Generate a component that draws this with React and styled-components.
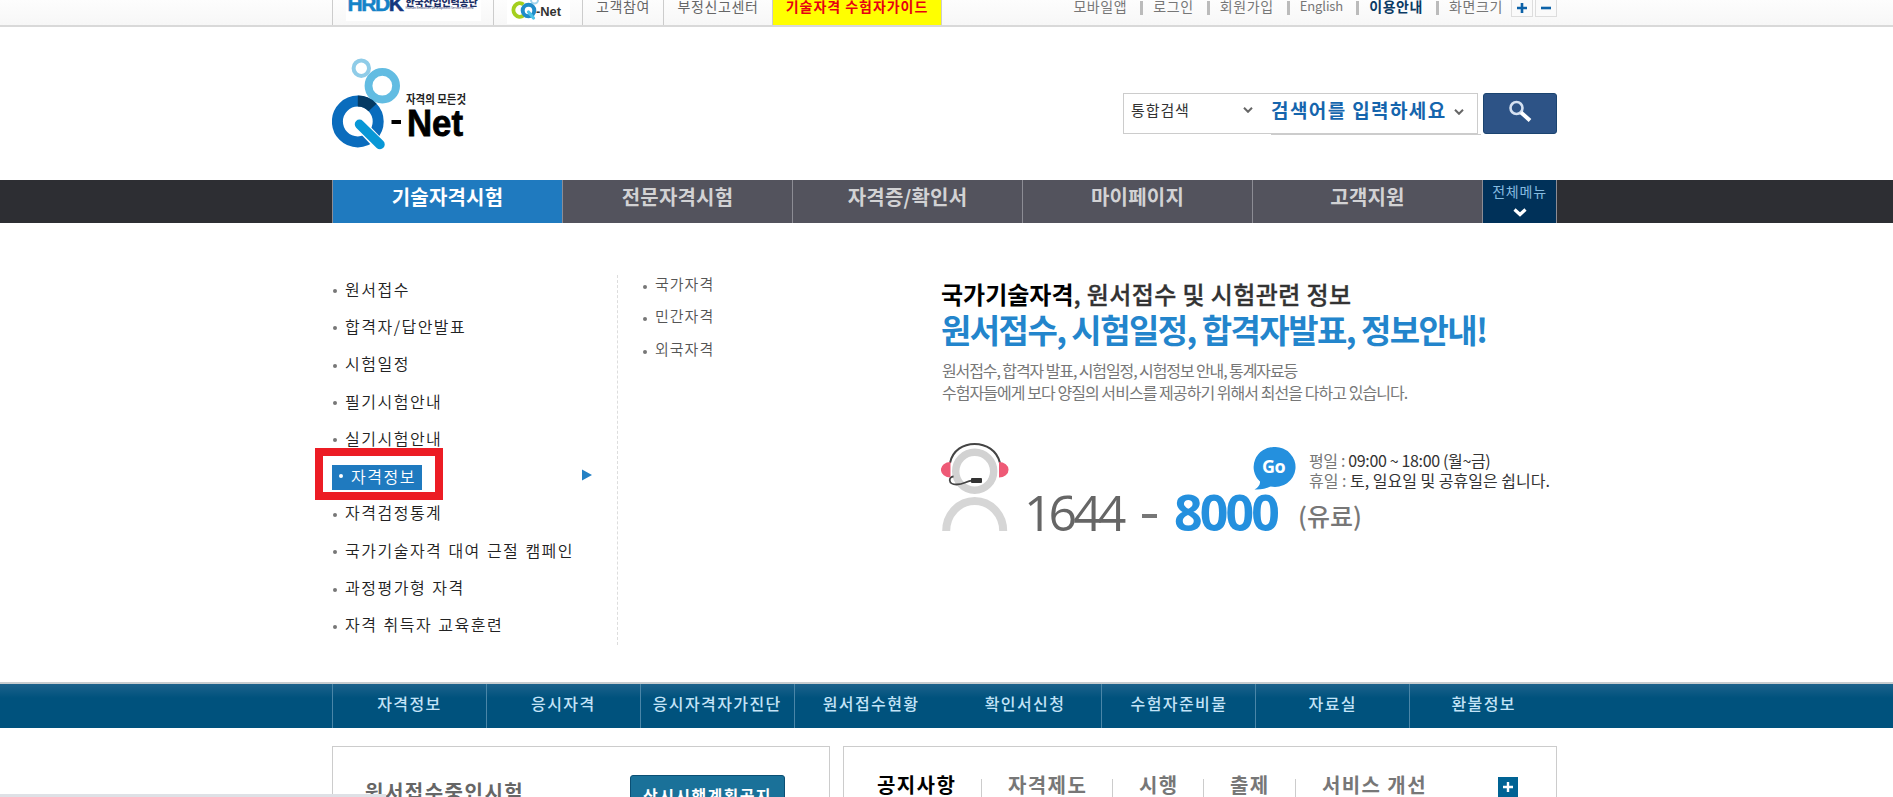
import styled, { createGlobalStyle } from 'styled-components';

const quickMenus = ['자격정보', '응시자격', '응시자격자가진단', '원서접수현황', '확인서신청', '수험자준비물', '자료실', '환불정보'];
const mainMenus = ['기술자격시험', '전문자격시험', '자격증/확인서', '마이페이지', '고객지원'];
const subMenus = [
    '원서접수',
    '합격자/답안발표',
    '시험일정',
    '필기시험안내',
    '실기시험안내',
    '자격정보',
    '자격검정통계',
    '국가기술자격 대여 근절 캠페인',
    '과정평가형 자격',
    '자격 취득자 교육훈련',
];
const depthMenus = ['국가자격', '민간자격', '외국자격'];
const noticeTabs = [
    { name: '공지사항', width: 104 },
    { name: '자격제도', width: 131 },
    { name: '시행', width: 91 },
    { name: '출제', width: 92 },
    { name: '서비스 개선', width: 160 },
];

function TopBar() {
    return (
        <TopBack>
            <TopInner>
                <LogoCell $width={161}>
                    <HrdkLogo>
                        <HrdkMark><b>HRD</b>K</HrdkMark>
                        <HrdkName>
                            한국산업인력공단
                            <small>Human Resources Development Service of Korea</small>
                        </HrdkName>
                    </HrdkLogo>
                </LogoCell>
                <LogoCell $width={89}>
                    <CqLogo>
                        <svg width="60" height="24" viewBox="0 0 60 24">
                            <circle cx="24.500" cy="0" r="3.500" fill="none" stroke="#9fd4ee" strokeWidth="2" />
                            <path d="M13.500 4.500A6.300 6.800 0 1 0 13.500 15.500" fill="none" stroke="#a4cf1f" strokeWidth="4" />
                            <circle cx="18.500" cy="10.500" r="5.800" fill="none" stroke="#1f8cc9" strokeWidth="4" />
                            <path d="M18.500 12l5 6" stroke="#4cc3e8" strokeWidth="3.200" strokeLinecap="round" />
                            <CqText x="26" y="15.500" textLength="25" lengthAdjust="spacingAndGlyphs">-Net</CqText>
                        </svg>
                    </CqLogo>
                </LogoCell>
                <TopCell $width={81}>고객참여</TopCell>
                <TopCell $width={109}>부정신고센터</TopCell>
                <GuideCell>기술자격 수험자가이드</GuideCell>
                <TopLinks>
                    <li>모바일앱</li>
                    <li>로그인</li>
                    <li>회원가입</li>
                    <li><span>English</span></li>
                    <li><strong>이용안내</strong></li>
                    <li>화면크기</li>
                </TopLinks>
                <SizeButton>
                    <svg width="10" height="10"><path d="M5 0v10M0 5h10" stroke="#0c62a8" strokeWidth="2.600" /></svg>
                </SizeButton>
                <SizeButton>
                    <svg width="10" height="10"><path d="M0 5h10" stroke="#0c62a8" strokeWidth="2.600" /></svg>
                </SizeButton>
            </TopInner>
        </TopBack>
    );
}

function QnetLogo() {
    return (
        <svg width="140" height="96" viewBox="0 0 140 96">
            <circle cx="29.300" cy="12.200" r="7.700" fill="none" stroke="#8fcce8" strokeWidth="4" />
            <circle cx="50.300" cy="29.700" r="13.800" fill="none" stroke="#62bce2" strokeWidth="7.800" />
            <circle cx="25.800" cy="65.500" r="20.400" fill="none" stroke="#0a6cbd" strokeWidth="11" />
            <path d="M25.800 45.100A20.400 20.400 0 0 1 40.500 51.500" fill="none" stroke="#053a63" strokeWidth="11" />
            <path d="M28 68.500L49.500 91" stroke="#fff" strokeWidth="12" />
            <path d="M27.500 68.300L48 88.500" stroke="#0897d6" strokeWidth="9.500" strokeLinecap="round" />
            <rect x="59.500" y="64" width="9.500" height="4" />
            <LogoSmall x="74" y="48" textLength="60" lengthAdjust="spacingAndGlyphs">자격의 모든것</LogoSmall>
            <LogoBig x="75" y="80" textLength="56" lengthAdjust="spacingAndGlyphs">Net</LogoBig>
        </svg>
    );
}

function Chevron() {
    return (
        <svg width="10" height="6" viewBox="0 0 10 6">
            <path d="M1 0.800l4 4 4-4" fill="none" stroke="#666" strokeWidth="2" />
        </svg>
    );
}

function Search() {
    return (
        <SearchRow>
            <SearchBox>
                <SearchType>통합검색<Chevron /></SearchType>
                <SearchInput>검색어를 입력하세요<Chevron /></SearchInput>
            </SearchBox>
            <SearchButton>
                <svg width="26" height="26" viewBox="0 0 26 26">
                    <circle cx="9.500" cy="9" r="6" fill="none" stroke="#d5e1f1" strokeWidth="2.600" />
                    <path d="M14 13.500l9 8" stroke="#fff" strokeWidth="4" />
                </svg>
            </SearchButton>
        </SearchRow>
    );
}

function CallCenter() {
    return (
        <svg width="70" height="89" viewBox="0 0 70 89">
            <circle cx="33.700" cy="29.300" r="19" fill="none" stroke="#d2d2d2" strokeWidth="7.400" />
            <path d="M5.200 89a28.500 30 0 0 1 57 0" fill="none" stroke="#d6d6d6" strokeWidth="8" />
            <path d="M9 21C14-4.500 53-4.500 59 21" fill="none" stroke="#444" strokeWidth="2" />
            <path d="M9.500 20a9.500 7.700 0 0 0 0 15.500zM58 20a9.500 7.700 0 0 1 0 15.500z" fill="#ee5a76" />
            <path d="M12.500 34.500c-5 0-6 8 3 8 8 0 9-3.500 16-4" fill="none" stroke="#444" strokeWidth="1.800" />
            <rect x="30" y="36" width="11" height="5" rx="1" fill="#333" />
        </svg>
    );
}

function Promo() {
    return (
        <PromoArea>
            <PromoTitle><b>국가기술자격</b>, 원서접수 및 시험관련 정보</PromoTitle>
            <PromoHead>원서접수, 시험일정, 합격자발표, 정보안내!</PromoHead>
            <PromoText $spacing="-1.1px">원서접수, 합격자 발표, 시험일정, 시험정보 안내, 통계자료등</PromoText>
            <PromoText $spacing="-0.95px">수험자들에게 보다 양질의 서비스를 제공하기 위해서 최선을 다하고 있습니다.</PromoText>
            <CallRow>
                <CallCenter />
                <PhoneFront>1644</PhoneFront>
                <PhoneDash />
                <PhoneBack>
                    8000
                    <GoBubble>
                        <svg width="44" height="44" viewBox="0 0 44 44">
                            <path d="M21.500 0a20.500 20 0 1 1-4 39.500q-7 3.500-16 3 6-3.500 5.500-8A20.500 20 0 0 1 21.500 0z" fill="#2490de" />
                        </svg>
                        <span>Go</span>
                    </GoBubble>
                </PhoneBack>
                <CallInfo>
                    <HourText $spacing="-0.35px"><i>평일 :</i> 09:00 ~ 18:00 (월~금)</HourText>
                    <HourText $spacing="0"><i>휴일 :</i> 토, 일요일 및 공휴일은 쉽니다.</HourText>
                    <Paid>(유료)</Paid>
                </CallInfo>
            </CallRow>
        </PromoArea>
    );
}

function App() {
    return (
        <Page>
            <GlobalStyle />
            <TopBar />
            <Header>
                <QnetLogo />
                <Search />
            </Header>
            <NavBack>
                <Nav>
                    {mainMenus.map((menu, i) => (
                        <NavItem key={menu} $on={i === 0}>{menu}</NavItem>
                    ))}
                    <AllMenu>
                        전체메뉴
                        <svg width="14" height="9" viewBox="0 0 14 9">
                            <path d="M1.500 1.500L7 6.500l5.500-5" fill="none" stroke="#fff" strokeWidth="3.200" />
                        </svg>
                    </AllMenu>
                </Nav>
            </NavBack>
            <SubArea>
                <SubList>
                    {subMenus.map((menu) => (
                        <SubItem key={menu}>
                            {menu === '자격정보' ? (
                                <>
                                    <SubOn>{menu}</SubOn>
                                    <RedFrame />
                                    <svg width="10" height="12"><path d="M0 0.500l10 5.500-10 5.500z" fill="#2381c5" /></svg>
                                </>
                            ) : menu}
                        </SubItem>
                    ))}
                </SubList>
                <DepthList>
                    {depthMenus.map((menu) => <DepthItem key={menu}>{menu}</DepthItem>)}
                </DepthList>
                <Promo />
            </SubArea>
            <QuickBack>
                <Quick>
                    {quickMenus.map((menu, i) => (
                        <QuickItem key={menu} $line={i !== 4}>{menu}</QuickItem>
                    ))}
                </Quick>
            </QuickBack>
            <Boards>
                <ExamCard>
                    <ExamTitle>원서접수중인시험</ExamTitle>
                    <ExamButton>상시시행계획공지</ExamButton>
                </ExamCard>
                <NoticeCard>
                    {noticeTabs.map((tab, i) => (
                        <NoticeTab key={tab.name} $on={i === 0} $width={tab.width}>{tab.name}</NoticeTab>
                    ))}
                    <MoreButton>
                        <svg width="10" height="10"><path d="M5 0v10M0 5h10" stroke="#fff" strokeWidth="2.400" /></svg>
                    </MoreButton>
                </NoticeCard>
            </Boards>
            <StatusBar />
        </Page>
    );
}

export default App;

const GlobalStyle = createGlobalStyle`
    * {
        box-sizing : border-box;
    }
    body {
        margin : 0;
        overflow : hidden;
        background : #fff;
        font-family : 'Noto Sans CJK KR', sans-serif;
    }
    ul {
        margin : 0;
        padding : 0;
        list-style : none;
    }
`;

const Page = styled.div`
    position : relative;
    height : 797px;
    overflow : hidden;
`;

const TopBack = styled.div`
    height : 27px;
    background : linear-gradient(#fdfdfd, #f7f7f7);
    border-bottom : 2px solid #d9d9d9;
`;

const TopInner = styled.div`
    display : flex;
    width : 1225px;
    height : 25px;
    margin-left : 332px;
`;

const TopCell = styled.div`
    width : ${(props) => props.$width}px;
    height : 25px;
    border-left : 1px solid #ccc;
    color : #666;
    font-size : 14px;
    letter-spacing : 0.6px;
    line-height : 12px;
    text-align : center;
    white-space : nowrap;
`;

const LogoCell = styled(TopCell)`
    display : flex;
    justify-content : center;
`;

const GuideCell = styled(TopCell)`
    width : 170px;
    border-right : 1px solid #ccc;
    background : #ffff00;
    color : #e60012;
    font-weight : 700;
    letter-spacing : 0.95px;
`;

const HrdkLogo = styled.div`
    display : flex;
    gap : 3px;
    width : 135px;
    height : 21px;
    padding-left : 2px;
    background : #fff;
`;

const HrdkMark = styled.div`
    height : 12px;
    color : #14387f;
    font-family : 'Liberation Sans', sans-serif;
    font-size : 21px;
    font-weight : 700;
    line-height : 8px;
    letter-spacing : -1.4px;
    -webkit-text-stroke : 0.5px;

    b {
        color : #1583c8;
    }
`;

const HrdkName = styled.div`
    color : #1d2f66;
    font-size : 10px;
    font-weight : 900;
    letter-spacing : -0.2px;
    line-height : 3px;
    text-align : left;

    small {
        display : block;
        margin-top : 4px;
        font-size : 3px;
        letter-spacing : 0;
        font-weight : 400;
    }
`;

const CqLogo = styled.div`
    width : 63px;
    height : 24px;
    padding-left : 3px;
    background : #fff;
`;

const CqText = styled.text`
    font-family : 'Liberation Sans', sans-serif;
    font-size : 13px;
    font-weight : 700;
    letter-spacing : 0;
    fill : #333;
`;

const TopLinks = styled.ul`
    display : flex;
    margin-left : auto;
    padding-right : 8px;
    color : #777;
    font-size : 14px;
    line-height : 12px;
    letter-spacing : 0.6px;

    li {
        display : flex;
        white-space : nowrap;
    }
    li + li::before {
        content : '';
        width : 3px;
        height : 14px;
        margin : 1px 10px 0 13px;
        background : #bbb;
    }
    span {
        font-size : 13px;
        letter-spacing : -0.1px;
    }
    strong {
        color : #0b3a63;
    }
`;

const SizeButton = styled.span`
    display : flex;
    justify-content : center;
    align-items : center;
    width : 22px;
    height : 17px;
    margin-right : 2px;
    border : 1px solid #ddd;
    border-top : 0;
    background : #fafafa;

    &:last-child {
        margin-right : 0;
    }
`;

const Header = styled.div`
    display : flex;
    justify-content : space-between;
    width : 1225px;
    height : 153px;
    margin-left : 332px;
    padding-top : 29px;
`;

const LogoSmall = styled.text`
    font-size : 12px;
    font-weight : 700;
    fill : #222;
`;

const LogoBig = styled.text`
    font-family : 'Liberation Sans', sans-serif;
    font-size : 37px;
    font-weight : 700;
    fill : #000;
    stroke : #000;
    stroke-width : 0.8px;
`;

const SearchRow = styled.div`
    display : flex;
    gap : 5px;
    margin-top : 37px;
`;

const SearchBox = styled.div`
    display : flex;
    width : 355px;
    height : 41px;
    border : 1px solid #ccc;
`;

const SearchType = styled.div`
    display : flex;
    flex-shrink : 0;
    align-items : center;
    justify-content : space-between;
    width : 129px;
    height : 31px;
    padding-left : 7px;
    color : #333;
    font-size : 15px;
    letter-spacing : 0.9px;
`;

const SearchInput = styled.div`
    display : flex;
    flex-shrink : 0;
    align-items : center;
    gap : 7px;
    width : 210px;
    height : 41px;
    margin-left : 18px;
    padding-bottom : 9px;
    border-bottom : 1px solid #ccc;
    color : #1565ad;
    font-size : 19px;
    font-weight : 700;
    letter-spacing : 1.4px;
    white-space : nowrap;

    svg {
        margin-top : 4px;
    }
`;

const SearchButton = styled.button`
    display : flex;
    justify-content : center;
    align-items : center;
    width : 74px;
    height : 41px;
    padding : 0 0 3px;
    border : 1px solid #1b4470;
    border-radius : 3px;
    background : #2d5386;
`;

const NavBack = styled.div`
    height : 43px;
    background : #2d2e33;
`;

const Nav = styled.div`
    display : flex;
    width : 1225px;
    height : 43px;
    margin-left : 332px;
    border-right : 1px solid #8c8c94;
`;

const NavItem = styled.div`
    width : 230px;
    border-left : 1px solid #8c8c94;
    background : ${(props) => (props.$on ? '#1f7abf' : '#53535d')};
    color : ${(props) => (props.$on ? '#fff' : '#d2d2d4')};
    font-size : 20px;
    font-weight : 700;
    letter-spacing : 0.2px;
    line-height : 34px;
    text-align : center;
`;

const AllMenu = styled.div`
    display : flex;
    flex-direction : column;
    align-items : center;
    gap : 8px;
    flex : 1;
    padding-top : 2px;
    border-left : 1px solid #8c8c94;
    background : #003159;
    color : #86bbe0;
    font-size : 14px;
    letter-spacing : 0.8px;
    line-height : 18px;
`;

const SubArea = styled.div`
    display : flex;
    height : 459px;
    margin-left : 332px;
    padding-top : 52px;
`;

const SubList = styled.ul`
    width : 286px;
    height : 370px;
    border-right : 1px dashed #ddd;
`;

const SubItem = styled.li`
    position : relative;
    top : -3px;
    display : flex;
    align-items : center;
    height : 37.3px;
    padding-bottom : 4px;
    color : #222;
    font-size : 16px;
    font-weight : 350;
    letter-spacing : 1.5px;
    word-spacing : 1px;

    &::before {
        content : '';
        width : 4px;
        height : 4px;
        margin : 5px 8px 0 1px;
        border-radius : 2px;
        background : #777;
    }
    &:has(span)::before {
        display : none;
    }
    > svg {
        margin-left : 160px;
    }
`;

const SubOn = styled.span`
    display : flex;
    align-items : center;
    width : 90px;
    height : 25px;
    margin-top : 4px;
    padding-bottom : 3px;
    background : #1f7abf;
    color : #fff;

    &::before {
        content : '';
        width : 4px;
        height : 4px;
        margin : 1px 8px 0 7px;
        border-radius : 2px;
        background : #fff;
    }
`;

/* marker drawn over the menu rows */
const RedFrame = styled.div`
    position : absolute;
    left : -17px;
    top : -10px;
    width : 128px;
    height : 52px;
    border : 8px solid #ec1c24;
`;

const DepthList = styled.ul`
    width : 298px;
    padding-left : 25px;
`;

const DepthItem = styled.li`
    display : flex;
    align-items : center;
    height : 32.5px;
    padding-bottom : 15px;
    color : #555;
    font-size : 15px;
    font-weight : 350;
    letter-spacing : 1px;
    line-height : 20px;

    &::before {
        content : '';
        width : 4px;
        height : 4px;
        margin : 6px 8px 0 0;
        border-radius : 2px;
        background : #777;
    }
`;

const PromoArea = styled.div`
    margin-left : 25px;
    white-space : nowrap;
`;

const PromoTitle = styled.div`
    height : 34px;
    margin-top : 2px;
    color : #333;
    font-size : 24px;
    font-weight : 500;
    letter-spacing : 0.4px;
    line-height : 34px;
    -webkit-text-stroke : 0.3px;

    b {
        color : #000;
        letter-spacing : 0;
        -webkit-text-stroke : 0;
    }
`;

const PromoHead = styled.div`
    height : 42px;
    margin-bottom : 6px;
    color : #2385cc;
    font-size : 33px;
    font-weight : 700;
    line-height : 37px;
    letter-spacing : -1.55px;
`;

const PromoText = styled.div`
    padding-left : 1px;
    color : #777;
    font-size : 16px;
    line-height : 22px;
    letter-spacing : ${(props) => props.$spacing};
`;

const CallRow = styled.div`
    display : flex;
    align-items : flex-end;
    height : 128px;
    font-family : 'Open Sans', 'Noto Sans CJK KR', sans-serif;
`;

const PhoneFront = styled.div`
    margin-left : 13px;
    width : 102px;
    color : #666;
    font-size : 50px;
    letter-spacing : -4px;
    line-height : 38px;
`;

const PhoneDash = styled.div`
    width : 15px;
    height : 4px;
    margin : 0 17px 13px 16px;
    background : #777;
`;

const PhoneBack = styled.div`
    position : relative;
    width : 122px;
    color : #2490de;
    font-size : 50px;
    font-weight : 700;
    letter-spacing : -2.8px;
    line-height : 38px;
`;

const GoBubble = styled.div`
    position : absolute;
    left : 79px;
    top : -46px;
    width : 44px;
    height : 44px;

    span {
        position : absolute;
        left : 9px;
        top : 0;
        color : #fff;
        font-size : 18px;
        font-weight : 700;
        letter-spacing : -0.5px;
    }
`;

const CallInfo = styled.div`
    margin-left : 13px;
    color : #333;
`;

const HourText = styled.div`
    font-family : 'Noto Sans CJK KR', sans-serif;
    font-size : 16px;
    letter-spacing : ${(props) => props.$spacing};
    line-height : 20px;

    i {
        color : #777;
        font-style : normal;
    }
`;

const Paid = styled.div`
    margin : 9px 0 0 -11px;
    color : #777;
    font-family : 'Noto Sans CJK KR', sans-serif;
    font-size : 25px;
    font-weight : 500;
    line-height : 32px;
`;

const QuickBack = styled.div`
    height : 46px;
    border-top : 2px solid #c8cdd0;
    background : linear-gradient(#1c628c, #00527d 14px);
`;

const Quick = styled.div`
    display : flex;
    width : 1225px;
    margin-left : 332px;
`;

const QuickItem = styled.div`
    flex-shrink : 0;
    width : 153.9px;
    height : 44px;
    border-left : 1px solid ${(props) => (props.$line ? '#4a86a8' : 'transparent')};
    color : #c3e3f7;
    font-size : 16px;
    font-weight : 500;
    letter-spacing : 1.4px;
    line-height : 38px;
    text-align : center;
    white-space : nowrap;

    &:last-child {
        width : 148px;
    }
`;

const Boards = styled.div`
    display : flex;
    gap : 13px;
    margin : 18px 0 0 332px;
`;

const ExamCard = styled.div`
    display : flex;
    justify-content : space-between;
    width : 498px;
    height : 200px;
    padding : 28px 44px 0 32px;
    border : 1px solid #ccc;
`;

const ExamTitle = styled.div`
    color : #666;
    font-size : 20px;
    font-weight : 700;
    letter-spacing : 1.5px;
    line-height : 33px;
`;

const ExamButton = styled.button`
    width : 155px;
    height : 40px;
    padding : 0;
    border : 1px solid #0b4f74;
    border-radius : 3px;
    background : #1a7199;
    color : #fff;
    font-family : inherit;
    font-size : 16px;
    font-weight : 700;
    letter-spacing : 1.4px;
    line-height : 34px;
`;

const NoticeCard = styled.div`
    display : flex;
    width : 714px;
    height : 200px;
    padding : 30px 0 0 33px;
    border : 1px solid #ccc;
`;

const NoticeTab = styled.div`
    display : flex;
    width : ${(props) => props.$width}px;
    height : 28px;
    color : ${(props) => (props.$on ? '#000' : '#777')};
    font-size : 20px;
    font-weight : 700;
    letter-spacing : 1.4px;
    line-height : 15px;
    white-space : nowrap;

    &:not(:first-child)::before {
        content : '';
        width : 1px;
        height : 20px;
        margin : 2px 26px 0 0;
        background : #ccc;
    }
`;

const MoreButton = styled.span`
    display : flex;
    justify-content : center;
    align-items : center;
    width : 20px;
    height : 20px;
    margin-left : 43px;
    background : #006394;
`;

/* browser status strip over the page bottom */
const StatusBar = styled.div`
    position : absolute;
    left : 0;
    bottom : 0;
    width : 386px;
    height : 3px;
    background : #dee1e6;
`;
